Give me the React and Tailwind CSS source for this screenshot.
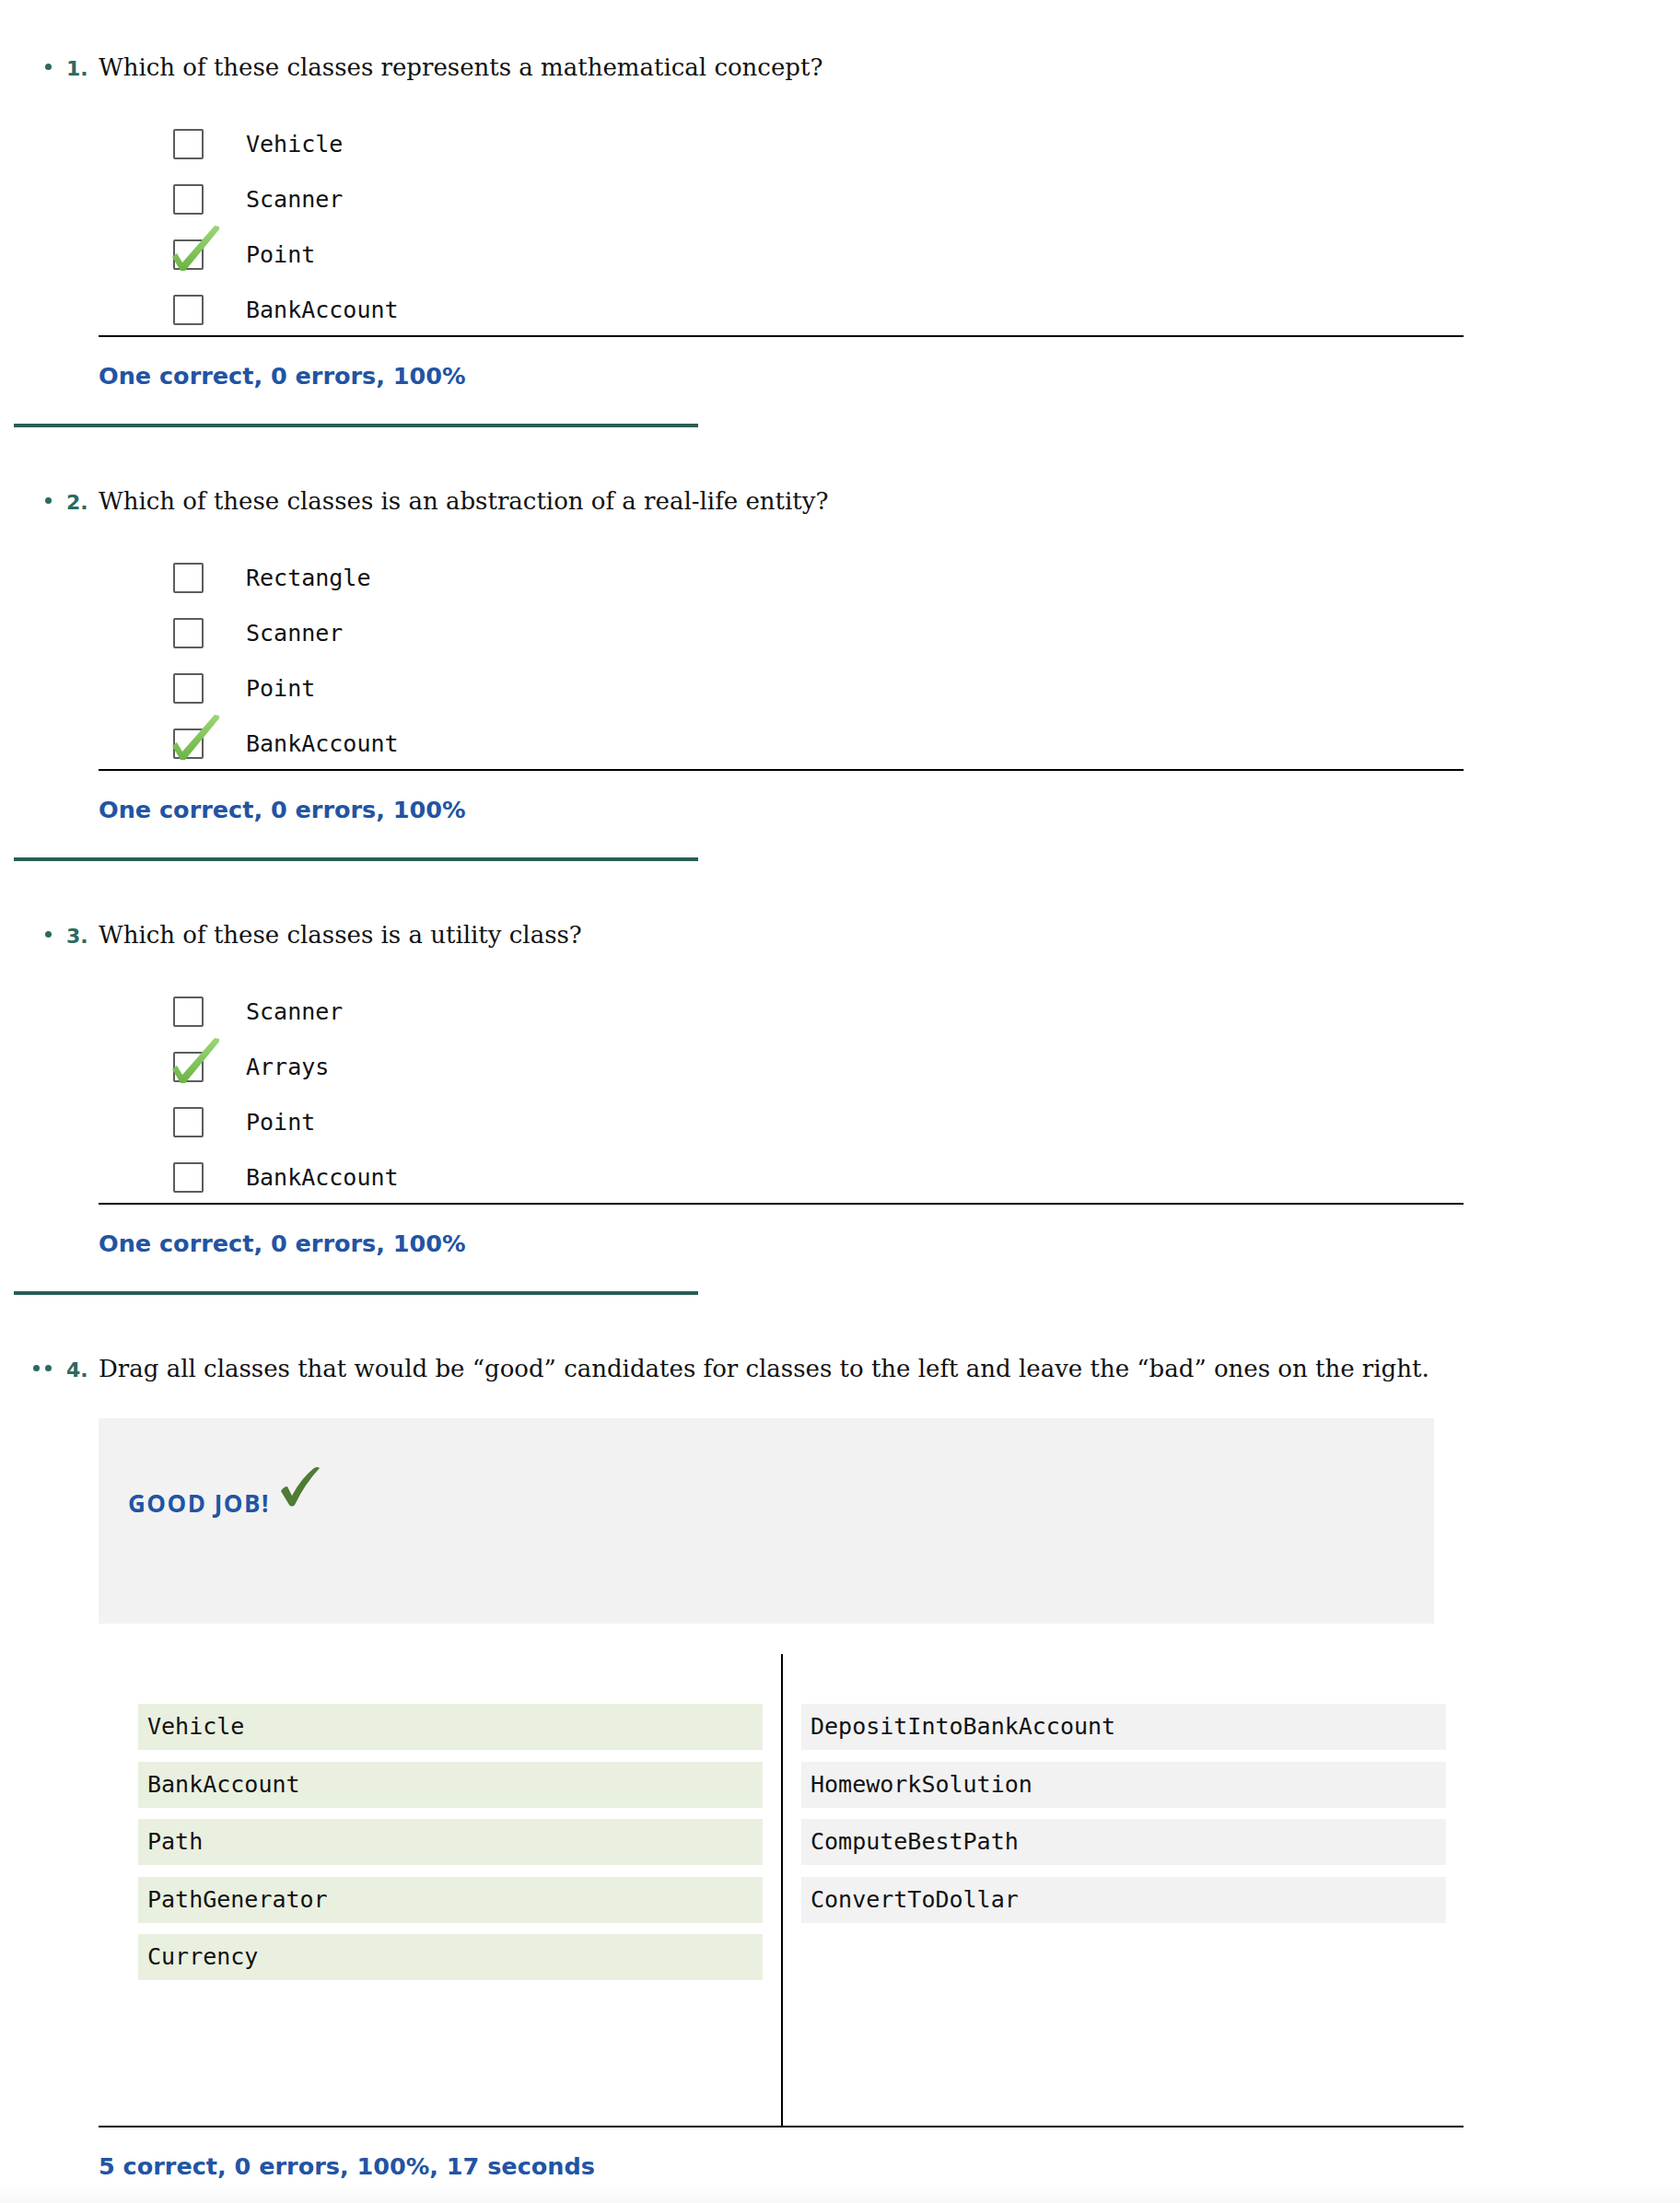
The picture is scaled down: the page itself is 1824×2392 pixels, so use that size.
import React from 'react';

// Quiz results page: three multiple choice questions and one drag-and-drop
const questions = [
  {
    n: 1,
    text: 'Which of these classes represents a mathematical concept?',
    options: ['Vehicle', 'Scanner', 'Point', 'BankAccount'],
    checked: 2,
  },
  {
    n: 2,
    text: 'Which of these classes is an abstraction of a real-life entity?',
    options: ['Rectangle', 'Scanner', 'Point', 'BankAccount'],
    checked: 3,
  },
  {
    n: 3,
    text: 'Which of these classes is a utility class?',
    options: ['Scanner', 'Arrays', 'Point', 'BankAccount'],
    checked: 1,
  },
];

const goodClasses = ['Vehicle', 'BankAccount', 'Path', 'PathGenerator', 'Currency'];
const badClasses = ['DepositIntoBankAccount', 'HomeworkSolution', 'ComputeBestPath', 'ConvertToDollar'];

const Heading = ({ bullets, n, text }) => (
  <div className="flex items-baseline h-[36px]">
    <span className="w-[56px] text-right text-[26px] leading-[36px] font-['DejaVu_Serif',serif]">
      {Array.from({ length: bullets }).map((_, i) => (
        <span key={i} className="inline-block w-[7px] h-[7px] rounded-full bg-[#2b6a61] mb-[6px] ml-[6px]" />
      ))}
    </span>
    <span className="w-[51px] pl-[16px] text-[22px] font-bold text-[#2b6a61] font-['DejaVu_Sans',sans-serif]">
      {n}.
    </span>
    <span className="text-[26px] leading-[36px] text-[#111] font-['DejaVu_Serif',serif]">
      {text}
    </span>
  </div>
);

const GreenTick = () => (
  <svg className="absolute left-[-1px] top-[-16px] w-[52px] h-[52px]" viewBox="0 0 52 52">
    <defs>
      <linearGradient id="tickGrad" x1="0" y1="0" x2="0" y2="1">
        <stop offset="0" stopColor="#9bd675" />
        <stop offset="1" stopColor="#6cb446" />
      </linearGradient>
    </defs>
    <path
      d="M0 35 L5 31 L11 41 L46 1 L51 2 L51 5 L14 50 L9 50 Z"
      fill="url(#tickGrad)"
      strokeLinejoin="round"
    />
  </svg>
);

const Checkbox = ({ checked }) => (
  <div className="relative w-[33px] h-[33px] shrink-0">
    <div className="w-full h-full border-2 border-[#5c5c5c] rounded-[2px] bg-white" />
    {checked && <GreenTick />}
  </div>
);

const Feedback = ({ children, className = '' }) => (
  <div className={`ml-[107px] text-[25.5px] leading-[28px] font-bold text-[#2254a3] font-['DejaVu_Sans',sans-serif] ${className}`}>
    {children}
  </div>
);

const MultipleChoice = ({ q }) => (
  <section className="h-[471px]">
    <Heading bullets={1} n={q.n} text={q.text} />
    <div className="mt-[48px] ml-[188px] flex flex-col gap-[25px]">
      {q.options.map((opt, i) => (
        <div key={opt} className="h-[35px] flex items-center gap-[46px]">
          <Checkbox checked={i === q.checked} />
          <span className="text-[25px] text-[#111] font-['DejaVu_Sans_Mono',monospace]">{opt}</span>
        </div>
      ))}
    </div>
    <div className="mt-[10px] ml-[107px] w-[1482px] h-[2px] bg-black" />
    <Feedback className="mt-[28px]">One correct, 0 errors, 100%</Feedback>
    <div className="mt-[38px] ml-[15px] w-[743px] h-[4px] bg-[#275e57]" />
  </section>
);

const BigCheck = () => (
  <svg className="w-[42px] h-[43px] ml-[12px] -mt-[24px]" viewBox="0 0 42 43">
    <path
      d="M0 26 Q3 21 7 21 L12 31 Q22 12 36 1 Q40 -1 42 1 Q26 18 15 41 Q12 44 9 41 Z"
      fill="#4f7b35"
    />
  </svg>
);

const DragItem = ({ label, bg }) => (
  <div className={`h-[50px] flex items-center px-[10px] ${bg}`}>
    <span className="text-[25px] text-[#111] font-['DejaVu_Sans_Mono',monospace]">{label}</span>
  </div>
);

export default function App() {
  return (
    <div className="relative w-[1824px] h-[2392px] overflow-hidden bg-white pt-[55px]">
      {questions.map(q => (
        <MultipleChoice key={q.n} q={q} />
      ))}

      {/* Drag and drop question */}
      <section>
        <Heading
          bullets={2}
          n={4}
          text="Drag all classes that would be “good” candidates for classes to the left and leave the “bad” ones on the right."
        />
        <div className="mt-[36px] ml-[107px] w-[1450px] h-[223px] bg-[#f2f2f2] pt-[77px] pl-[32px]">
          <div className="flex items-start">
            <span className="text-[26px] leading-[30px] font-bold tracking-[1.5px] text-[#2254a3] font-['Open_Sans',sans-serif]">
              GOOD JOB!
            </span>
            <BigCheck />
          </div>
        </div>

        <div className="mt-[33px] ml-[107px] w-[1482px] h-[514px] flex border-b-2 border-black">
          <div className="w-[743px] h-full border-r-2 border-black pt-[54px] pl-[43px] pr-[20px] flex flex-col gap-[12.5px]">
            {goodClasses.map(c => (
              <DragItem key={c} label={c} bg="bg-[#e9f0e0]" />
            ))}
          </div>
          <div className="flex-1 pt-[54px] pl-[20px] pr-[19px] flex flex-col gap-[12.5px]">
            {badClasses.map(c => (
              <DragItem key={c} label={c} bg="bg-[#f2f2f2]" />
            ))}
          </div>
        </div>
        <Feedback className="mt-[28px]">5 correct, 0 errors, 100%, 17 seconds</Feedback>
      </section>

      <div className="absolute bottom-0 left-0 w-full h-[22px] bg-linear-to-b from-white/0 to-[#f8f8f8]" />
    </div>
  );
}
